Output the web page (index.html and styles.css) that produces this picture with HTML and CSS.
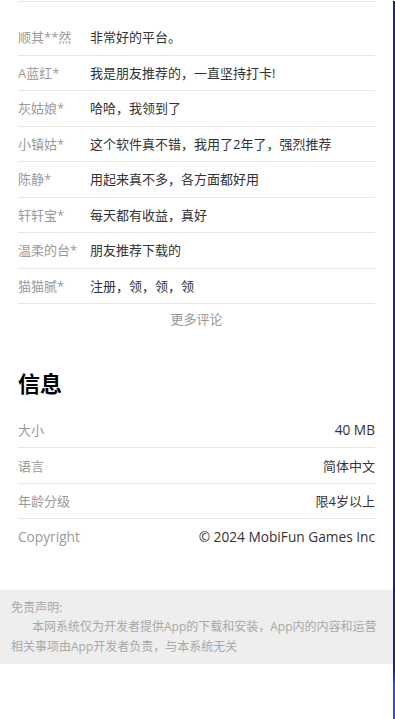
FILE: index.html
```html
<!DOCTYPE html>
<html lang="zh-CN">
<head>
    <meta charset="UTF-8">
    <meta name="viewport" content="width=device-width, initial-scale=1.0">
    <title>应用详情</title>
    <link rel="stylesheet" href="styles.css">
</head>
<body>
    <div class="page">
        <div class="wrap">
            <div class="top-line"></div>
            <!-- 评论 -->
            <ul class="comments">
                <li class="comment"><span class="c-name">顺其**然</span><span class="c-text">非常好的平台。</span></li>
                <li class="comment"><span class="c-name">A蓝红*</span><span class="c-text">我是朋友推荐的，一直坚持打卡!</span></li>
                <li class="comment"><span class="c-name">灰姑娘*</span><span class="c-text">哈哈，我领到了</span></li>
                <li class="comment"><span class="c-name">小镇姑*</span><span class="c-text">这个软件真不错，我用了2年了，强烈推荐</span></li>
                <li class="comment"><span class="c-name">陈静*</span><span class="c-text">用起来真不多，各方面都好用</span></li>
                <li class="comment"><span class="c-name">轩轩宝*</span><span class="c-text">每天都有收益，真好</span></li>
                <li class="comment"><span class="c-name">温柔的台*</span><span class="c-text">朋友推荐下载的</span></li>
                <li class="comment"><span class="c-name">猫猫腻*</span><span class="c-text">注册，领，领，领</span></li>
            </ul>
            <div class="more">更多评论</div>

            <!-- 信息 -->
            <h2 class="section-title">信息</h2>
            <ul class="info">
                <li class="info-row"><span class="i-label">大小</span><span class="i-value latin">40 MB</span></li>
                <li class="info-row"><span class="i-label">语言</span><span class="i-value">简体中文</span></li>
                <li class="info-row"><span class="i-label">年龄分级</span><span class="i-value">限4岁以上</span></li>
                <li class="info-row"><span class="i-label latin">Copyright</span><span class="i-value latin">© 2024 MobiFun Games Inc</span></li>
            </ul>
        </div>

        <!-- 免责声明 -->
        <div class="disclaimer">
            <p class="d-title">免责声明:</p>
            <p class="d-text">本网系统仅为开发者提供App的下载和安装，App内的内容和运营相关事项由App开发者负责，与本系统无关</p>
        </div>
    </div>
</body>
</html>
```

FILE: styles.css
```css
* {
    margin: 0;
    padding: 0;
    box-sizing: border-box;
}
body {
    font-family: 'Open Sans', 'Noto Sans CJK SC', sans-serif;
    background-color: #fff;
    color: #333;
    font-size: 13px;
}
ul {
    list-style: none;
}
.page {
    width: 395px;
    min-height: 100vh;
    border-right: 2px solid #1d305e;
    border-image: linear-gradient(#1b2d5c 0, #1b2d5c 93%, #2b4fd6 95%) 1;
}
.wrap {
    padding: 0 18px;
}
.top-line {
    height: 2px;
    border-top: 1px solid #e6e6e6;
    margin-top: 1px;
}
.comments {
    margin-top: 17px;
}
.comment {
    display: flex;
    line-height: 20px;
    padding: 7.25px 0;
    border-bottom: 1px solid #e6e6e6;
}
.c-name {
    width: 72px;
    flex-shrink: 0;
    color: #9a9a9a;
    white-space: nowrap;
}
.c-text {
    color: #333;
}
.more {
    text-align: center;
    color: #999;
    line-height: 30px;
}
.section-title {
    font-size: 22px;
    font-weight: bold;
    color: #000;
    line-height: 30px;
    margin-top: 34px;
}
.info {
    margin-top: 14.5px;
}
.info-row {
    display: flex;
    justify-content: space-between;
    align-items: center;
    height: 35.5px;
    border-bottom: 1px solid #e6e6e6;
}
.info-row:last-child {
    border-bottom: none;
}
.i-label {
    color: #9a9a9a;
}
.i-value {
    color: #333;
}
.latin {
    font-size: 13.7px;
}
.disclaimer {
    margin-top: 35px;
    width: 393px;
    background: #eeeeee;
    padding: 8px 11px 8px;
    color: #a8a8a8;
    font-size: 12px;
    line-height: 19.5px;
}
.d-text {
    text-indent: 21px;
}
```
